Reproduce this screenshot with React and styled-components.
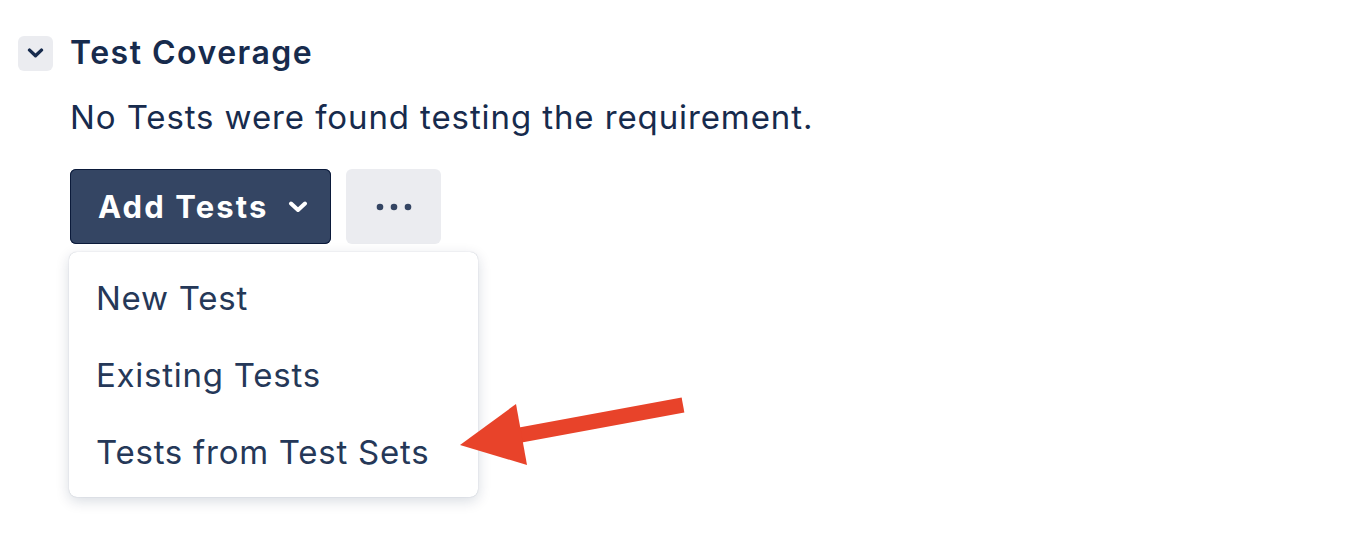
import React from "react";
import styled, { createGlobalStyle } from "styled-components";

const GlobalStyle = createGlobalStyle`
  html, body {
    margin: 0;
    padding: 0;
    background: #ffffff;
  }
  body {
    font-family: Inter, "Noto Sans", "Liberation Sans", sans-serif;
    color: #172b4d;
  }
`;

const Page = styled.div`
  position: relative;
  width: 1370px;
  height: 534px;
  padding: 35px 0 0 18px;
  box-sizing: border-box;
`;

const Header = styled.div`
  display: flex;
  align-items: center;
  gap: 17px;
`;

const Toggle = styled.button`
  width: 35px;
  height: 35px;
  border: none;
  border-radius: 6px;
  background: #ebecf0;
  display: flex;
  align-items: center;
  justify-content: center;
  padding: 0;
`;

const Title = styled.h2`
  margin: 0;
  font-size: 32px;
  line-height: 36px;
  font-weight: 600;
  color: #172b4d;
  letter-spacing: 1.5px;
`;

const Body = styled.div`
  padding-left: 52px;
`;

const Message = styled.p`
  margin: 29px 0 0;
  font-size: 33px;
  font-weight: 400;
  line-height: 34px;
  letter-spacing: 0.9px;
  color: #172b4d;
`;

const Actions = styled.div`
  display: flex;
  gap: 15px;
  margin-top: 35px;
`;

const DropdownWrap = styled.div`
  position: relative;
`;

const Button = styled.button`
  height: 75px;
  border: none;
  border-radius: 6px;
  display: flex;
  align-items: center;
  justify-content: ${(p) => (p.$primary ? "flex-start" : "center")};
  gap: 20px;
  font-family: inherit;
  font-size: 31px;
  font-weight: 700;
  letter-spacing: 2.1px;
  padding: ${(p) => (p.$primary ? "0 0 0 28px" : "0")};
  width: ${(p) => (p.$primary ? "261px" : "95px")};
  background: ${(p) => (p.$primary ? "#344563" : "#ebecf0")};
  color: ${(p) => (p.$primary ? "#ffffff" : "#42526e")};
  box-shadow: ${(p) => (p.$primary ? "inset 0 0 0 1px #0b1a3a" : "none")};
`;

const Menu = styled.ul`
  position: absolute;
  top: 83px;
  left: -1px;
  width: 409px;
  margin: 0;
  padding: 7px 0;
  list-style: none;
  background: #ffffff;
  border-radius: 8px;
  box-shadow: 0 4px 14px rgba(9, 30, 66, 0.16), 0 0 1px rgba(9, 30, 66, 0.3);
`;

const MenuItem = styled.li`
  height: 77px;
  display: flex;
  align-items: center;
  padding-left: 27px;
  font-size: 33px;
  letter-spacing: 0.75px;
  color: #253858;
`;

const Arrow = styled.svg`
  position: absolute;
  left: 0;
  top: 0;
  pointer-events: none;
`;

function Chevron({ color, size }) {
  return (
    <svg width={size} height={size * 0.6} viewBox="0 0 20 12">
      <path
        d="M3 2.5 L10 9 L17 2.5"
        fill="none"
        stroke={color}
        strokeWidth="4"
        strokeLinecap="round"
        strokeLinejoin="round"
      />
    </svg>
  );
}

function Dots() {
  return (
    <svg width="36" height="8" viewBox="0 0 36 8">
      <circle cx="4" cy="4" r="3.3" fill="#344563" />
      <circle cx="18" cy="4" r="3.3" fill="#344563" />
      <circle cx="32" cy="4" r="3.3" fill="#344563" />
    </svg>
  );
}

export default function App() {
  return (
    <>
      <GlobalStyle />
      <Page>
        <Header>
          <Toggle aria-label="collapse">
            <Chevron color="#172b4d" size={17} />
          </Toggle>
          <Title>Test Coverage</Title>
        </Header>
        <Body>
          <Message>No Tests were found testing the requirement.</Message>
          <Actions>
            <DropdownWrap>
              <Button $primary>
                Add Tests
                <Chevron color="#ffffff" size={20} />
              </Button>
              <Menu>
                <MenuItem>New Test</MenuItem>
                <MenuItem>Existing Tests</MenuItem>
                <MenuItem>Tests from Test Sets</MenuItem>
              </Menu>
            </DropdownWrap>
            <Button aria-label="more">
              <Dots />
            </Button>
          </Actions>
        </Body>
        <Arrow width="1370" height="534" viewBox="0 0 1370 534">
          <line x1="683" y1="405" x2="515" y2="436" stroke="#e8432a" strokeWidth="15" />
          <polygon points="460,445 516,404 527,465" fill="#e8432a" />
        </Arrow>
      </Page>
    </>
  );
}
